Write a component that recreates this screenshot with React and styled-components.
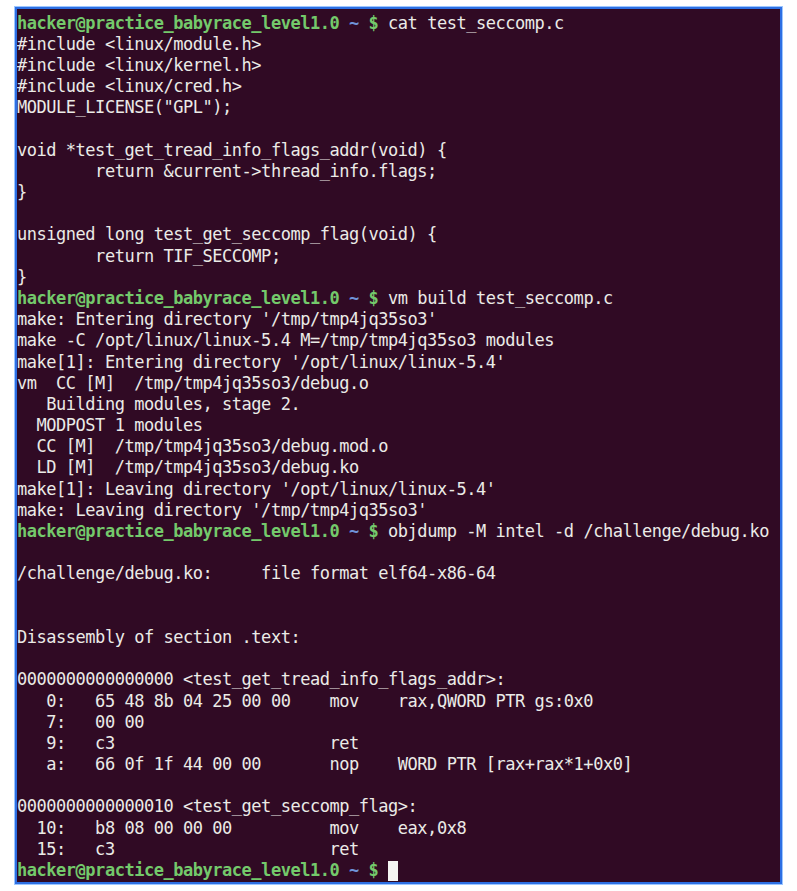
import React from 'react'
import styled, { createGlobalStyle } from 'styled-components'

const GlobalStyle = createGlobalStyle`
  html, body {
    margin: 0;
    padding: 0;
    background: #ffffff;
  }
`

const Page = styled.div`
  width: 797px;
  height: 891px;
  padding: 7px 0 0 15px;
  box-sizing: border-box;
  background: #ffffff;
`

const Terminal = styled.div`
  width: 767px;
  height: 877px;
  box-sizing: border-box;
  border: 2px solid #2d6fe3;
  box-shadow: 0 0 0 1px #9cc6ff;
  background: #300a24;
  padding-top: 3.5px;
  overflow: hidden;
  font-family: "DejaVu Sans Mono", "Liberation Mono", monospace;
  font-size: 17px;
  letter-spacing: -0.47px;
  color: #ebebe7;
`

const Line = styled.div`
  height: 21.2px;
  line-height: 21.2px;
  white-space: pre;
`

const User = styled.span`
  color: #74c96b;
  font-weight: bold;
`

const Tilde = styled.span`
  color: #6f93d9;
  font-weight: bold;
`

const Dollar = styled.span`
  color: #74c96b;
  font-weight: bold;
`

const Cursor = styled.span`
  display: inline-block;
  width: 10px;
  height: 20px;
  background: #f4f4f2;
  vertical-align: -5px;
`

const Prompt = ({ cmd, cursor }) => (
  <Line>
    <User>hacker@practice_babyrace_level1.0</User> <Tilde>~</Tilde> <Dollar>$</Dollar>{' '}
    {cmd}
    {cursor && <Cursor />}
  </Line>
)

const output1 = [
  '#include <linux/module.h>',
  '#include <linux/kernel.h>',
  '#include <linux/cred.h>',
  'MODULE_LICENSE("GPL");',
  '',
  'void *test_get_tread_info_flags_addr(void) {',
  '        return &current->thread_info.flags;',
  '}',
  '',
  'unsigned long test_get_seccomp_flag(void) {',
  '        return TIF_SECCOMP;',
  '}',
]

const output2 = [
  "make: Entering directory '/tmp/tmp4jq35so3'",
  'make -C /opt/linux/linux-5.4 M=/tmp/tmp4jq35so3 modules',
  "make[1]: Entering directory '/opt/linux/linux-5.4'",
  'vm  CC [M]  /tmp/tmp4jq35so3/debug.o',
  '   Building modules, stage 2.',
  '  MODPOST 1 modules',
  '  CC [M]  /tmp/tmp4jq35so3/debug.mod.o',
  '  LD [M]  /tmp/tmp4jq35so3/debug.ko',
  "make[1]: Leaving directory '/opt/linux/linux-5.4'",
  "make: Leaving directory '/tmp/tmp4jq35so3'",
]

const output3 = [
  '',
  '/challenge/debug.ko:     file format elf64-x86-64',
  '',
  '',
  'Disassembly of section .text:',
  '',
  '0000000000000000 <test_get_tread_info_flags_addr>:',
  '   0:   65 48 8b 04 25 00 00    mov    rax,QWORD PTR gs:0x0',
  '   7:   00 00',
  '   9:   c3                      ret',
  '   a:   66 0f 1f 44 00 00       nop    WORD PTR [rax+rax*1+0x0]',
  '',
  '0000000000000010 <test_get_seccomp_flag>:',
  '  10:   b8 08 00 00 00          mov    eax,0x8',
  '  15:   c3                      ret',
]

const Output = ({ lines }) =>
  lines.map((text, i) => <Line key={i}>{text}</Line>)

export default function App() {
  return (
    <Page>
      <GlobalStyle />
      <Terminal>
        <Prompt cmd="cat test_seccomp.c" />
        <Output lines={output1} />
        <Prompt cmd="vm build test_seccomp.c" />
        <Output lines={output2} />
        <Prompt cmd="objdump -M intel -d /challenge/debug.ko" />
        <Output lines={output3} />
        <Prompt cmd="" cursor />
      </Terminal>
    </Page>
  )
}
